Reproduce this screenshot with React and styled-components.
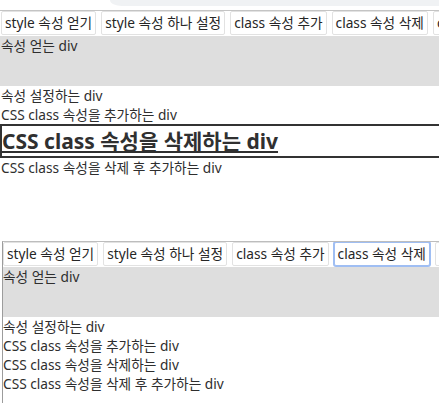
import React from "react";
import styled, { createGlobalStyle, css } from "styled-components";

const GlobalStyle = createGlobalStyle`
  html, body {
    margin: 0;
    padding: 0;
    background: #ffffff;
    overflow: hidden;
  }
  body {
    font-family: "Noto Sans", "Noto Sans CJK KR", sans-serif;
    color: #2e2e2e;
  }
`;

const Screen = styled.div`
  width: 439px;
  height: 418px;
  overflow: hidden;
  display: flex;
  flex-direction: column;
  background: #ffffff;
`;

const ChromeStrip = styled.div`
  display: flex;
  height: 10px;
  border-bottom: 1px solid #c4c4c4;
  flex-shrink: 0;
`;

const ChromeSpacer = styled.div`
  width: 110px;
`;

const ChromeTab = styled.div`
  flex: 1;
  height: 6px;
  background: #f0f2f4;
  border-bottom-left-radius: 12px 6px;
`;

const Frame = styled.div`
  display: flex;
  flex-direction: column;
  flex-shrink: 0;
  overflow: hidden;
  ${(p) =>
    p.$bordered
      ? css`
          margin-left: 2px;
          height: 161px;
          border-top: 1px solid #bdbdbd;
          border-left: 1px solid #9c9c9c;
        `
      : css`
          height: 230px;
        `}
`;

const Toolbar = styled.div`
  display: flex;
  gap: 5px;
  padding-left: ${(p) => (p.$inset ? "0" : "1px")};
  white-space: nowrap;
  height: 25px;
  align-items: flex-start;
`;

const Button = styled.button`
  flex-shrink: 0;
  font-family: "Noto Sans", "Noto Sans CJK KR", sans-serif;
  font-size: 13.7px;
  line-height: 20px;
  color: #262626;
  background: #ffffff;
  border: 1px solid #e2e2e2;
  border-radius: 2px;
  padding: 1px 3px;
  margin: 0;
  ${(p) =>
    p.$focused &&
    css`
      border-color: #9fbef3;
      box-shadow: 0 0 0 1px #9fbef3;
    `}
`;

const AttrBox = styled.div`
  height: 50px;
  background: #dedede;
  font-size: 13.7px;
  line-height: 19px;
  padding-left: ${(p) => (p.$inset ? "0" : "1px")};
`;

const Line = styled.div`
  font-size: 13.7px;
  line-height: 19px;
  padding-left: ${(p) => (p.$inset ? "0" : "1px")};
  white-space: nowrap;
`;

const HeadingBox = styled.div`
  border: 2px solid #333333;
  font-size: 21px;
  font-weight: 700;
  line-height: 30px;
  color: #303030;
  text-decoration: underline;
  text-decoration-thickness: 2px;
  text-underline-offset: 2px;
  white-space: nowrap;
  width: 470px;
`;

const buttons = [
  "style 속성 얻기",
  "style 속성 하나 설정",
  "class 속성 추가",
  "class 속성 삭제",
  "class 속성 삭제 후 추가",
];

function ButtonBar({ inset, focusedIndex }) {
  return (
    <Toolbar $inset={inset}>
      {buttons.map((b, i) => (
        <Button key={b} $focused={i === focusedIndex}>
          {b}
        </Button>
      ))}
    </Toolbar>
  );
}

export default function App() {
  return (
    <>
      <GlobalStyle />
      <Screen>
        <ChromeStrip>
          <ChromeSpacer />
          <ChromeTab />
        </ChromeStrip>

        <Frame>
          <ButtonBar focusedIndex={-1} />
          <AttrBox>속성 얻는 div</AttrBox>
          <Line>속성 설정하는 div</Line>
          <Line>CSS class 속성을 추가하는 div</Line>
          <HeadingBox>CSS class 속성을 삭제하는 div</HeadingBox>
          <Line>CSS class 속성을 삭제 후 추가하는 div</Line>
        </Frame>

        <Frame $bordered>
          <ButtonBar inset focusedIndex={3} />
          <AttrBox $inset>속성 얻는 div</AttrBox>
          <Line $inset>속성 설정하는 div</Line>
          <Line $inset>CSS class 속성을 추가하는 div</Line>
          <Line $inset>CSS class 속성을 삭제하는 div</Line>
          <Line $inset>CSS class 속성을 삭제 후 추가하는 div</Line>
        </Frame>
      </Screen>
    </>
  );
}
